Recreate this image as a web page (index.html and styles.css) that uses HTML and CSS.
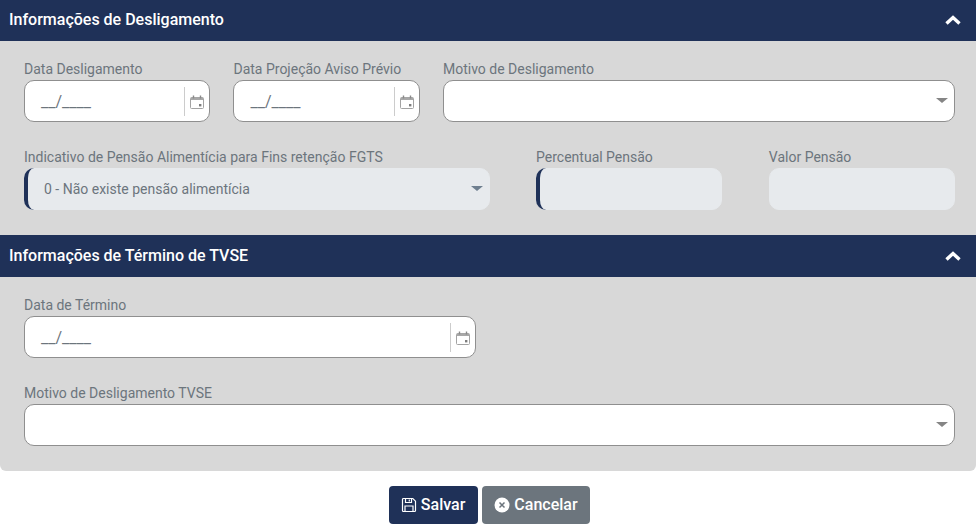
FILE: index.html
```html
<!DOCTYPE html>
<html lang="pt-BR">
<head>
<meta charset="utf-8">
<title>Informações de Desligamento</title>
<link rel="stylesheet" href="styles.css">
</head>
<body>
<main class="panel">
  <header class="section-head head-first">
    <h2>Informações de Desligamento</h2>
    <svg class="chevron" viewBox="0 0 16 10"><path d="M1.500 8.500 8 2.500 14.500 8.500" fill="none" stroke="#fff" stroke-width="3.400"/></svg>
  </header>
  <section class="section-body first">
    <div class="row row-a">
      <div class="field w20">
        <label>Data Desligamento</label>
        <div class="control"><span class="mask">__/____</span><span class="cal-wrap"><svg class="cal" viewBox="0 0 14 14"><path d="M.5 3.5a1 1 0 0 1 1-1h11a1 1 0 0 1 1 1v9a1 1 0 0 1-1 1h-11a1 1 0 0 1-1-1z" fill="#fff" stroke="#a3a3a3"/><path d="M1 2.500h12v2.500H1z" fill="#a8a8a8"/><path d="M3.500 .5v3M10.500 .5v3" stroke="#8a8a8a" stroke-width="1.400"/><path d="M9 9h2.400v2.400H9z" fill="#7d7d7d"/></svg></span></div>
      </div>
      <div class="field w20">
        <label>Data Projeção Aviso Prévio</label>
        <div class="control"><span class="mask">__/____</span><span class="cal-wrap"><svg class="cal" viewBox="0 0 14 14"><path d="M.5 3.5a1 1 0 0 1 1-1h11a1 1 0 0 1 1 1v9a1 1 0 0 1-1 1h-11a1 1 0 0 1-1-1z" fill="#fff" stroke="#a3a3a3"/><path d="M1 2.500h12v2.500H1z" fill="#a8a8a8"/><path d="M3.500 .5v3M10.500 .5v3" stroke="#8a8a8a" stroke-width="1.400"/><path d="M9 9h2.400v2.400H9z" fill="#7d7d7d"/></svg></span></div>
      </div>
      <div class="field w55">
        <label>Motivo de Desligamento</label>
        <div class="control select"><span class="caret"></span></div>
      </div>
    </div>
    <div class="row row-b">
      <div class="field w50">
        <label>Indicativo de Pensão Alimentícia para Fins retenção FGTS</label>
        <div class="control disabled required"><span class="value">0 - Não existe pensão alimentícia</span><span class="caret"></span></div>
      </div>
      <div class="field w20">
        <label>Percentual Pensão</label>
        <div class="control disabled required"></div>
      </div>
      <div class="field w20">
        <label>Valor Pensão</label>
        <div class="control disabled"></div>
      </div>
    </div>
  </section>
  <header class="section-head">
    <h2>Informações de Término de TVSE</h2>
    <svg class="chevron" viewBox="0 0 16 10"><path d="M1.500 8.500 8 2.500 14.500 8.500" fill="none" stroke="#fff" stroke-width="3.400"/></svg>
  </header>
  <section class="section-body second">
    <div class="row row-a">
      <div class="field w-half">
        <label>Data de Término</label>
        <div class="control"><span class="mask">__/____</span><span class="cal-wrap"><svg class="cal" viewBox="0 0 14 14"><path d="M.5 3.5a1 1 0 0 1 1-1h11a1 1 0 0 1 1 1v9a1 1 0 0 1-1 1h-11a1 1 0 0 1-1-1z" fill="#fff" stroke="#a3a3a3"/><path d="M1 2.500h12v2.500H1z" fill="#a8a8a8"/><path d="M3.500 .5v3M10.500 .5v3" stroke="#8a8a8a" stroke-width="1.400"/><path d="M9 9h2.400v2.400H9z" fill="#7d7d7d"/></svg></span></div>
      </div>
    </div>
    <div class="row row-b">
      <div class="field w100">
        <label>Motivo de Desligamento TVSE</label>
        <div class="control select"><span class="caret"></span></div>
      </div>
    </div>
  </section>
</main>
<footer class="actions">
  <button class="btn primary" type="button">
    <svg class="btn-icon" viewBox="0 0 16 16"><path d="M1.500 2.500a1 1 0 0 1 1-1h9.300l2.700 2.700v9.300a1 1 0 0 1-1 1h-11a1 1 0 0 1-1-1z" fill="none" stroke="#fff" stroke-width="1.200"/><path d="M4.500 1.500v4h6v-4M8.300 2.600v1.800M4 14.500v-5.500h8v5.500" fill="none" stroke="#fff" stroke-width="1.200"/></svg>
    Salvar
  </button>
  <button class="btn secondary" type="button">
    <svg class="btn-icon" viewBox="0 0 16 16"><circle cx="8" cy="8" r="7.500" fill="#fff"/><path d="M5.500 5.500l5 5M10.500 5.500l-5 5" stroke="#6c757d" stroke-width="1.500"/></svg>
    Cancelar
  </button>
</footer>
</body>
</html>
```
FILE: styles.css
```css
* { box-sizing: border-box; }
html, body { margin: 0; padding: 0; }
body { background: #fff; font-family: Roboto, sans-serif; font-size: 14px; color: #6c757d; }
.panel { background: #d8d8d8; border-radius: 0 0 6px 6px; height: 471px; }
.section-head { height: 42px; background: #1f3158; color: #fff; display: flex; align-items: center; justify-content: space-between; padding: 0 15px 1px 9px; }
.section-head.head-first { height: 41px; }
.section-head h2 { margin: 0; font-size: 16px; font-weight: 500; line-height: 20px; }
.section-body { padding: 19px 21px 0 24px; }
.section-body.first { height: 194px; }
.chevron { width: 16px; height: 10px; display: block; }
.row { display: flex; justify-content: space-between; }
.row-a { margin-bottom: 26px; }
.field label { display: block; font-size: 14px; line-height: 19px; margin-bottom: 1px; color: #6c757d; white-space: nowrap; }
.w20 { width: 20%; }
.w50 { width: 50%; }
.w55 { width: 55%; }
.w100 { width: 100%; }
.w-half { width: 48.55%; }
.control { position: relative; height: 42px; border: 1px solid #8f8f8f; border-radius: 10px; background: #fff; display: flex; align-items: center; padding-left: 16px; font-size: 14px; }
.control.disabled { background: #e7eaed; border-color: #e7eaed; }
.control.required::before { content: ""; position: absolute; left: -1px; top: -1px; bottom: -1px; width: 12px; border-left: 4px solid #1f3158; border-radius: 10px 0 0 10px; }
.mask { color: #6c757d; font-size: 16px; }
.value { padding-left: 3px; color: #6c757d; }
.cal-wrap { position: absolute; right: 0; top: 6px; height: 29px; width: 25px; border-left: 1px solid #ccc; display: flex; align-items: center; justify-content: center; }
.cal { width: 14px; height: 14px; display: block; }
.caret { position: absolute; right: 6px; top: 17px; width: 0; height: 0; border-left: 6px solid transparent; border-right: 6px solid transparent; border-top: 5.500px solid #858585; }
.disabled .caret { border-top-color: #6f7f8f; }
.actions { display: flex; justify-content: center; gap: 4px; padding: 15px 0 0 3px; }
.btn { height: 38px; border: 0; border-radius: 4px; color: #fff; font-family: Roboto, sans-serif; font-size: 16px; font-weight: 500; display: flex; align-items: center; gap: 4px; padding: 0 12.500px 2px; }
.primary { background: #1f3158; padding-left: 12px; }
.secondary { background: #6c757d; }
.btn-icon { width: 16px; height: 16px; display: block; margin-top: 2px; }
```
